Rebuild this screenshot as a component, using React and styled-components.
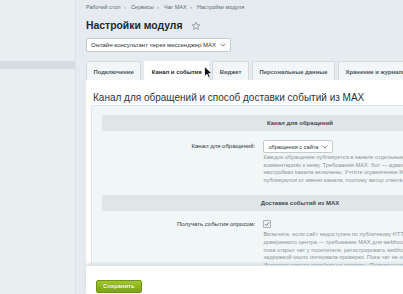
import styled, { createGlobalStyle } from "styled-components";

const GlobalStyle = createGlobalStyle`
  html, body {
    margin: 0;
    padding: 0;
    overflow: hidden;
    background: #e5ebee;
  }
  body {
    font-family: "Liberation Sans", Arial, sans-serif;
    color: #2b353a;
  }
`

const Screen = styled.div`
  position: relative;
  display: flex;
  width: 520px;
  height: 294px;
`

const Sidebar = styled.aside`
  width: 75px;
  flex-shrink: 0;
  padding-top: 61px;
  background: #e9eef1;
  border-right: 1px solid #d9e1e5;
`

const SideItem = styled.div`
  height: 8px;
  background: ${p => (p.$active ? "#d5dde2" : "transparent")};
`

const Main = styled.main`
  flex: 1;
  min-width: 0;
  display: flex;
  flex-direction: column;
  padding: 4px 6px 0 10px;
`

const Crumbs = styled.nav`
  display: flex;
  align-items: center;
  gap: 5px;
  height: 7px;
  font-size: 5.5px;
  line-height: 7px;
  color: #5d6b73;
`

const Sep = styled.span`
  color: #8a979e;
  font-size: 6px;
`

const TitleRow = styled.div`
  display: flex;
  align-items: center;
  gap: 8px;
  margin-top: 8px;
  height: 14px;
`

const Title = styled.h1`
  margin: 0;
  font-size: 10.4px;
  line-height: 14px;
  font-weight: 700;
  color: #20292e;
`

const Select = styled.div`
  display: inline-flex;
  align-items: center;
  gap: 4px;
  box-sizing: border-box;
  height: ${p => p.$h || 14}px;
  padding: 0 4px;
  background: #fff;
  border: 1px solid #c3cbcf;
  border-radius: 2px;
  font-size: ${p => p.$fs || 6}px;
  color: #2a3338;
  white-space: nowrap;
`

const TopSelect = styled(Select)`
  margin-top: 5px;
  align-self: flex-start;
`

const Tabs = styled.div`
  display: flex;
  gap: 3px;
  margin-top: 9px;
  height: 19px;
`

const Tab = styled.div`
  display: flex;
  align-items: center;
  box-sizing: border-box;
  padding: 1px 6.5px 0;
  font-size: 5.9px;
  font-weight: 700;
  white-space: nowrap;
  color: ${p => (p.$active ? "#1d2529" : "#4a565c")};
  background: ${p => (p.$active ? "#fff" : "#f3f6f7")};
  border: 1px solid ${p => (p.$active ? "#fff" : "#d4dbdf")};
  border-bottom: none;
  border-radius: 2px 2px 0 0;
`

const Panel = styled.section`
  flex: 1;
  min-height: 0;
  overflow: hidden;
  background: #fff;
  padding: 12px 5px 0;
`

const Heading = styled.h2`
  margin: 0 0 1px 2px;
  font-size: 10px;
  line-height: 12px;
  font-weight: 400;
  color: #2a3439;
  white-space: nowrap;
`

const Box = styled.div`
  background: #f1f6f7;
  border: 1px solid #dfe6e9;
  padding: 9px 10px 20px;
`

const Band = styled.div`
  height: 16px;
  display: flex;
  align-items: center;
  justify-content: center;
  background: #e0e6e8;
  font-size: 6px;
  font-weight: 700;
  color: #3d4a51;
`

const Row = styled.div`
  display: grid;
  grid-template-columns: 40% 1fr;
  margin: ${p => p.$top || 9}px 0 ${p => p.$bottom || 11}px;
`

const Label = styled.div`
  text-align: right;
  padding-right: 5px;
  font-size: 6px;
  line-height: ${p => p.$lh || 13}px;
  color: #2e383d;
  white-space: nowrap;
`

const Value = styled.div`
  padding-left: 3px;
  display: flex;
  flex-direction: column;
  align-items: flex-start;
  min-width: 0;
`

const Hint = styled.div`
  margin-top: ${p => p.$top || 1}px;
  font-size: 5.7px;
  line-height: 7.6px;
  color: #8b959a;
  white-space: nowrap;
`

const Check = styled.span`
  display: flex;
  align-items: center;
  justify-content: center;
  box-sizing: border-box;
  width: 8px;
  height: 8px;
  border: 1px solid #aab4b9;
  border-radius: 1px;
  background: #eef2f3;
`

const Footer = styled.footer`
  height: 29px;
  flex-shrink: 0;
  box-sizing: border-box;
  padding: 8px 10px 0;
  background: #fff;
  border-top: 1px solid #dce3e6;
  box-shadow: 0 -2px 3px rgba(120, 140, 150, 0.18);
  position: relative;
`

const SaveButton = styled.button`
  height: 13px;
  padding: 0 6px;
  border: 1px solid #6f9313;
  border-radius: 2px;
  background: linear-gradient(#a0c72b, #7ea315);
  color: #fff;
  font-family: inherit;
  font-size: 5.9px;
  font-weight: 700;
  text-shadow: 0 0 1px rgba(60, 90, 0, 0.5);
  cursor: pointer;
`

const Cursor = styled.svg`
  position: absolute;
  left: 204px;
  top: 66px;
`

const Chevron = () => (
  <svg width="6" height="4" viewBox="0 0 6 4">
    <path d="M0.6 0.8 L3 3.1 L5.4 0.8" fill="none" stroke="#59666d" strokeWidth="0.8" />
  </svg>
)

const Star = () => (
  <svg width="10" height="10" viewBox="0 0 24 24">
    <path
      d="M12 2.8l2.8 5.9 6.4.8-4.7 4.4 1.2 6.4L12 17.2l-5.7 3.1 1.2-6.4-4.7-4.4 6.4-.8z"
      fill="none"
      stroke="#7e8b92"
      strokeWidth="1.8"
      strokeLinejoin="round"
    />
  </svg>
)

const crumbs = ["Рабочий стол", "Сервисы", "Чат MAX", "Настройки модуля"]
const tabs = ["Подключение", "Канал и события", "Виджет", "Персональные данные", "Хранение и журналы"]

const channelHint = [
  "Каждое обращение публикуется в канале отдельным постом, а переписка ведётся в",
  "комментариях к нему. Требования MAX: бот — администратор канала, комментарии в",
  "настройках канала включены. Учтите ограничение MAX: ответы операторов",
  "публикуются от имени канала, поэтому автор ответа не виден посетителю.",
]

const pollHint = [
  "Включите, если сайт недоступен по публичному HTTPS-адресу с сертификатом",
  "доверенного центра — требование MAX для webhook. Модуль будет опрашивать MAX,",
  "пока открыт чат у посетителя, регистрировать webhook не нужно. Ответы приходят с",
  "задержкой около интервала проверки. Пока чат не открыт, события не запрашиваются.",
  "Интервал опроса задаётся на вкладке «Подключение».",
]

export default function App() {
  return (
    <>
      <GlobalStyle />
      <Screen>
        <Sidebar>
          <SideItem $active />
        </Sidebar>
        <Main>
          <Crumbs>
            {crumbs.map((c, i) => (
              <span key={c}>
                {c}
                {i < crumbs.length - 1 && <Sep>&nbsp;&nbsp;›</Sep>}
              </span>
            ))}
          </Crumbs>
          <TitleRow>
            <Title>Настройки модуля</Title>
            <Star />
          </TitleRow>
          <TopSelect>
            Онлайн-консультант через мессенджер MAX <Chevron />
          </TopSelect>
          <Tabs>
            {tabs.map((t, i) => (
              <Tab key={t} $active={i === 1}>{t}</Tab>
            ))}
          </Tabs>
          <Panel>
            <Heading>Канал для обращений и способ доставки событий из MAX</Heading>
            <Box>
              <Band>Канал для обращений</Band>
              <Row>
                <Label>Канал для обращений:</Label>
                <Value>
                  <Select $h={13} $fs={5.6}>обращения с сайта <Chevron /></Select>
                  <Hint $top={1}>
                    {channelHint.map(l => <div key={l}>{l}</div>)}
                  </Hint>
                </Value>
              </Row>
              <Band>Доставка событий из MAX</Band>
              <Row $top={9}>
                <Label $lh={8}>Получать события опросом:</Label>
                <Value>
                  <Check>
                    <svg width="6" height="6" viewBox="0 0 6 6">
                      <path d="M1 3.1 L2.4 4.5 L5 1.4" fill="none" stroke="#6b787e" strokeWidth="0.9" />
                    </svg>
                  </Check>
                  <Hint $top={3}>
                    {pollHint.map(l => <div key={l}>{l}</div>)}
                  </Hint>
                </Value>
              </Row>
            </Box>
          </Panel>
          <Footer>
            <SaveButton>Сохранить</SaveButton>
          </Footer>
        </Main>
        <Cursor width="9" height="13" viewBox="0 0 9 13">
          <path d="M0.5 0.5 L0.5 10.5 L3 8.2 L4.7 12 L6.3 11.3 L4.7 7.6 L8 7.6 Z" fill="#111" stroke="#fff" strokeWidth="0.8" />
        </Cursor>
      </Screen>
    </>
  )
}
